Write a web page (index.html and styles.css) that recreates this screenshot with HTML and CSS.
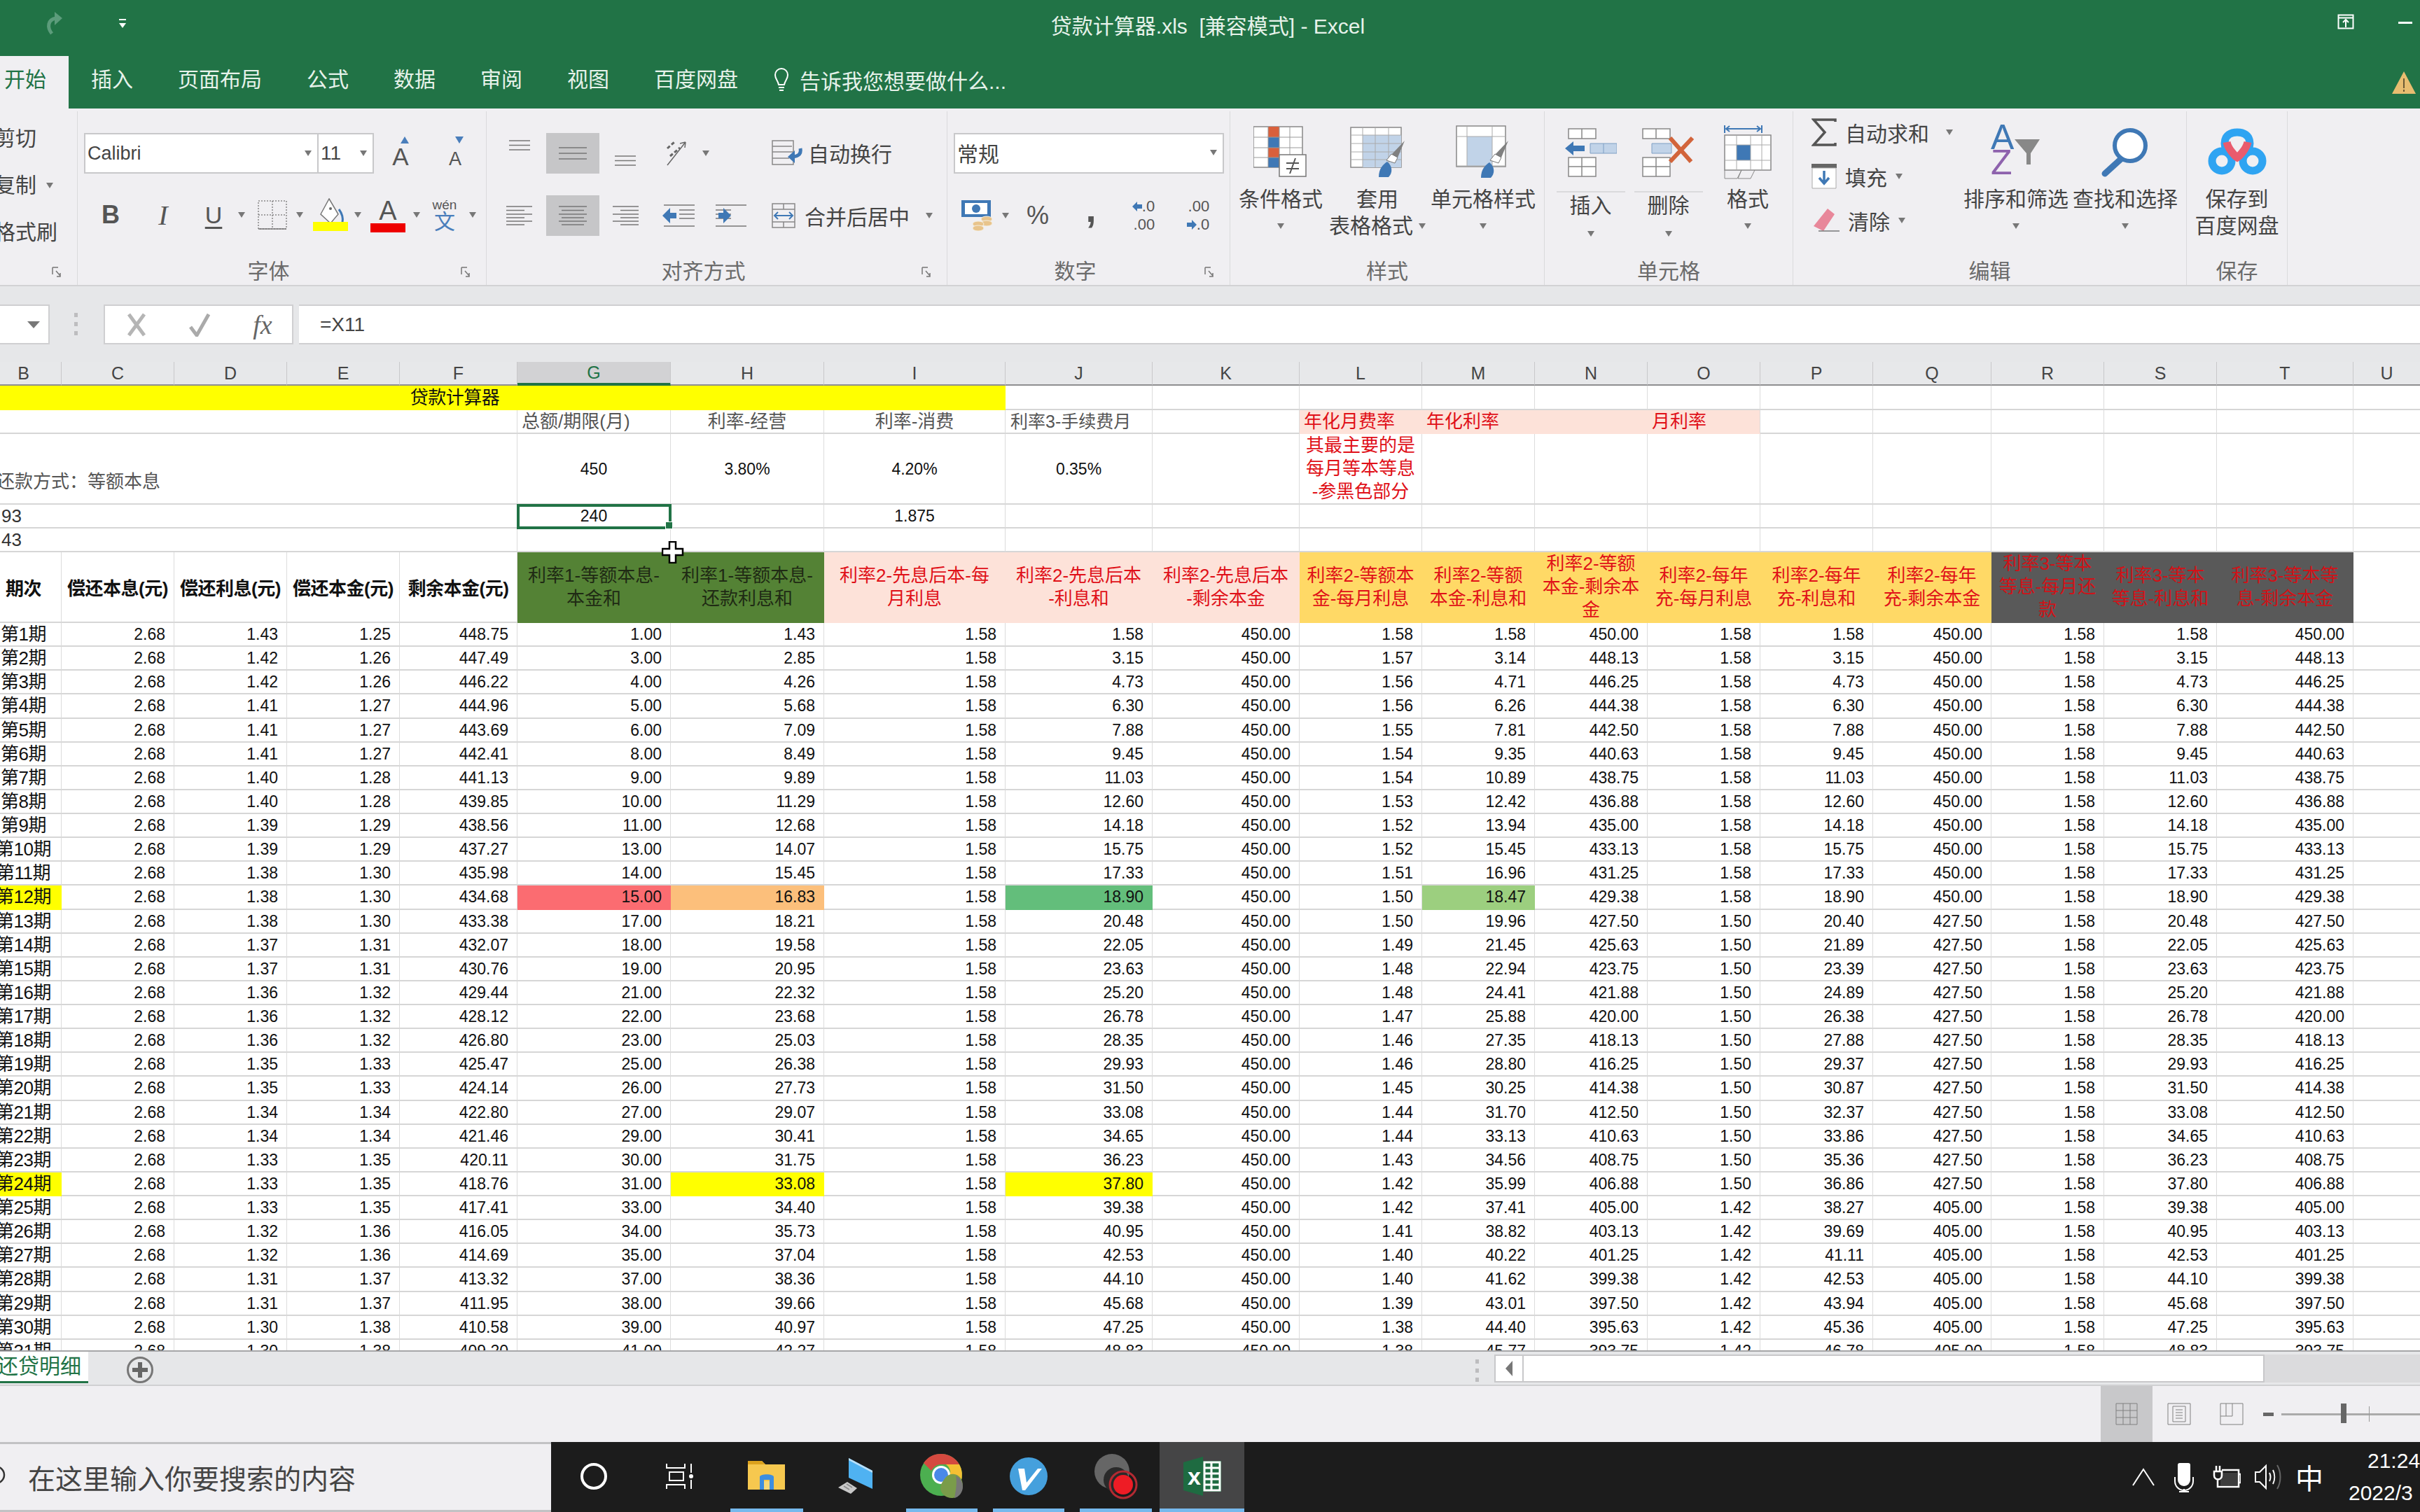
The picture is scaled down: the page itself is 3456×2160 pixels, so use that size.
FILE: index.html
```html
<!DOCTYPE html>
<html lang="zh-CN">
<head>
<meta charset="utf-8">
<title>贷款计算器.xls - Excel</title>
<link rel="stylesheet" href="styles.css">
</head>
<body>
<div class="window">
<header class="titlebar">
  <div class="qat">
    <svg class="redo" width="36" height="36" viewBox="0 0 36 36"><path d="M14 33C7 24 8 13 20 11" fill="none" stroke="#5c9c7b" stroke-width="5"/><path d="M18 2l11 9-11 10z" fill="#5c9c7b"/></svg>
    <svg class="qat-more" width="12" height="14" viewBox="0 0 12 14"><path d="M1 1h10" stroke="#fff" stroke-width="2"/><path d="M1 6h10l-5 7z" fill="#fff"/></svg>
  </div>
  <div class="doc-title">贷款计算器.xls&nbsp; [兼容模式] - Excel</div>
  <div class="winctl">
    <svg width="24" height="22" viewBox="0 0 24 22"><path d="M1.500 1.500h21v19h-21zM1.500 5.500h21M12 19V9M8 12l4-4 4 4" fill="none" stroke="#fff" stroke-width="2"/></svg>
    <span class="minimize"></span>
  </div>
</header>
<nav class="tabs">
  <span class="tab active">开始</span><span class="tab">插入</span><span class="tab">页面布局</span><span class="tab">公式</span><span class="tab">数据</span><span class="tab">审阅</span><span class="tab">视图</span><span class="tab">百度网盘</span>
  <span class="tell">
    <svg width="22" height="36" viewBox="0 0 22 36"><path d="M7 25C6 19 2 17 2 11a9 9 0 0 1 18 0c0 6-4 8-5 14zM7 29h8M8 33h6" fill="none" stroke="#fff" stroke-width="2"/></svg>
    告诉我您想要做什么...
  </span>
  <svg class="warn" width="36" height="32" viewBox="0 0 36 32"><path d="M18 0l17 32H1z" fill="#e8bd70"/><path d="M18 10v14M18 26v3" stroke="#6b5a35" stroke-width="2"/></svg>
</nav>

<section class="ribbon">
  <div class="group g-clip">
    <div class="body clip-body">
      <span>剪切</span>
      <span>复制<i class="dd dd-copy"></i></span>
      <span>格式刷</span>
    </div>
    <div class="label launch"><b></b><svg class="launcher" width="14" height="16" viewBox="0 0 14 16"><path d="M1 1h8M1 1v10M6 6l6 7M12 9v5H7" fill="none" stroke="#777" stroke-width="1.500"/></svg></div>
  </div>

  <div class="group g-font">
    <div class="body">
      <div class="font-row1">
        <div class="combo">Calibri<i class="dd"></i></div>
        <div class="combo size">11<i class="dd"></i></div>
        <div class="fsz"><svg width="12" height="10" viewBox="0 0 12 10"><path d="M6 0l6 10H0z" fill="#4a7ebb"/></svg><span class="big-a">A</span></div>
        <div class="fsz"><svg width="12" height="10" viewBox="0 0 12 10"><path d="M6 10l6-10H0z" fill="#4a7ebb"/></svg><span class="small-a">A</span></div>
      </div>
      <div class="font-row2">
        <span class="fmt bold">B</span>
        <span class="fmt ital">I</span>
        <span class="fmt under">U</span>
        <i class="dd"></i>
        <svg width="42" height="42" viewBox="0 0 42 42"><path d="M1 1h40v40H1zM21 1v40M1 21h40" fill="none" stroke="#888" stroke-width="1.500" stroke-dasharray="2 2"/><path d="M1 41h40" stroke="#777" stroke-width="1.500"/></svg>
        <i class="dd"></i>
        <svg width="52" height="48" viewBox="0 0 52 48"><path d="M24 1l13 22-11 13-14-13z" fill="#fff" stroke="#777" stroke-width="1.500"/><path d="M38 16c6 8 6 14 5 19" fill="none" stroke="#3f78b5" stroke-width="3"/><circle cx="26" cy="15" r="2" fill="#666"/><path d="M1 34h50v13H1z" fill="#ffff00"/></svg>
        <i class="dd"></i>
        <div class="fontcolor"><span>A</span><b></b></div>
        <i class="dd"></i>
        <div class="wen"><span>wén</span><em>文</em></div>
        <i class="dd"></i>
      </div>
    </div>
    <div class="label launch"><b>字体</b><svg class="launcher" width="14" height="16" viewBox="0 0 14 16"><path d="M1 1h8M1 1v10M6 6l6 7M12 9v5H7" fill="none" stroke="#777" stroke-width="1.500"/></svg></div>
  </div>

  <div class="group g-align">
    <div class="body">
      <div class="align-row1">
        <svg width="32" height="16" viewBox="0 0 32 16"><path d="M1 1h30M1 7.500h30M1 14h30" stroke="#777" stroke-width="1.500"/></svg>
        <div class="pressed"><svg width="40" height="18" viewBox="0 0 40 18"><path d="M0 1h40M0 9h40M0 17h40" stroke="#777" stroke-width="1.500"/></svg></div>
        <svg class="lower" width="32" height="16" viewBox="0 0 32 16"><path d="M1 1h30M1 7.500h30M1 14h30" stroke="#777" stroke-width="1.500"/></svg>
        <div class="orient"><svg width="42" height="38" viewBox="0 0 42 38"><path d="M6 36L32 3M32 3l-8 2M32 3l-1 8" fill="none" stroke="#666" stroke-width="1.500"/><path d="M6 12l10-9M10 23l14-12" fill="none" stroke="#666" stroke-width="3" stroke-dasharray="5 3"/></svg><i class="dd"></i></div>
        <div class="wrap"><svg width="46" height="36" viewBox="0 0 46 36"><path d="M1 1h30v16H1zM1 17h30v18H1zM1 9h28M1 26h24" fill="none" stroke="#888" stroke-width="1.500"/><path d="M41 12c2 10-6 12-14 12" fill="none" stroke="#3f78b5" stroke-width="5"/><path d="M33 15l-10 9 10 9z" fill="#3f78b5"/></svg><span>自动换行</span></div>
      </div>
      <div class="align-row2">
        <svg width="38" height="28" viewBox="0 0 38 28"><path d="M0 1h37M0 6.500h26M0 12h37M0 17h26M0 22h37M0 27h26" stroke="#777" stroke-width="1.500"/></svg>
        <div class="pressed"><svg width="40" height="28" viewBox="0 0 40 28"><path d="M0 1h40M4 6.500h32M0 12h40M4 17h32M0 22h40M4 27h32" stroke="#777" stroke-width="1.500"/></svg></div>
        <svg width="38" height="28" viewBox="0 0 38 28"><path d="M1 1h37M12 6.500h26M1 12h37M12 17h26M1 22h37M12 27h26" stroke="#777" stroke-width="1.500"/></svg>
        <svg width="46" height="32" viewBox="0 0 46 32"><path d="M2 1h44M24 8h22M24 14h22M24 20h22M2 31h44" stroke="#777" stroke-width="1.500"/><path d="M0 16l11-11v7h9v8h-9v7z" fill="#3f78b5"/></svg>
        <svg width="46" height="32" viewBox="0 0 46 32"><path d="M0 1h44M0 8h22M0 14h22M0 20h22M0 31h44" stroke="#777" stroke-width="1.500"/><path d="M20 16L9 5v7H2v8h7v7z" fill="#3f78b5" transform="translate(2 0)"/></svg>
        <div class="merge"><svg width="34" height="36" viewBox="0 0 34 36"><path d="M1 1h32v34H1zM1 9h32M1 27h32M17 1v8M17 27v8" fill="none" stroke="#888" stroke-width="1.500"/><path d="M4 18h26M9 13l-5 5 5 5M25 13l5 5-5 5" fill="none" stroke="#3f78b5" stroke-width="2"/></svg><span>合并后居中</span><i class="dd"></i></div>
      </div>
    </div>
    <div class="label launch"><b>对齐方式</b><svg class="launcher" width="14" height="16" viewBox="0 0 14 16"><path d="M1 1h8M1 1v10M6 6l6 7M12 9v5H7" fill="none" stroke="#777" stroke-width="1.500"/></svg></div>
  </div>

  <div class="group g-num">
    <div class="body">
      <div class="combo num">常规<i class="dd"></i></div>
      <div class="num-row2">
        <svg width="52" height="44" viewBox="0 0 52 44"><path d="M0 0h42v24H0z" fill="#3f78b5"/><path d="M5 4h32v16H5z" fill="#fff"/><circle cx="21" cy="12" r="6" fill="#3f78b5"/><g fill="#e8c48c" stroke="#f5efe2"><ellipse cx="36" cy="27" rx="8" ry="4"/><ellipse cx="36" cy="33" rx="8" ry="4"/><ellipse cx="24" cy="34" rx="8" ry="4"/><ellipse cx="24" cy="40" rx="8" ry="4"/></g></svg>
        <i class="dd"></i>
        <span class="pct">%</span>
        <span class="comma">,</span>
        <div class="dec"><span><svg width="14" height="14" viewBox="0 0 14 14"><path d="M0 7l7-7v4h7v6H7v4z" fill="#3f78b5"/></svg>.0</span><span>.00</span></div>
        <div class="dec"><span>.00</span><span><svg width="14" height="14" viewBox="0 0 14 14"><path d="M14 7L7 0v4H0v6h7v4z" fill="#3f78b5"/></svg>.0</span></div>
      </div>
    </div>
    <div class="label launch"><b>数字</b><svg class="launcher" width="14" height="16" viewBox="0 0 14 16"><path d="M1 1h8M1 1v10M6 6l6 7M12 9v5H7" fill="none" stroke="#777" stroke-width="1.500"/></svg></div>
  </div>

  <div class="group g-style">
    <div class="body big-row">
      <div class="big b138">
        <svg class="bigicon" width="78" height="72" viewBox="0 0 78 72"><path d="M0 0h70v58H0z" fill="#fff" stroke="#888" stroke-width="1.500"/><path d="M21 0h16v15H21z" fill="#d9603c"/><path d="M21 15h16v15H21z" fill="#3f78b5"/><path d="M21 30h16v14H21z" fill="#d9603c"/><path d="M21 44h16v14H21z" fill="#3f78b5"/><path d="M0 15h70M0 30h70M0 44h70M21 0v58M37 0v58M52 0v58" fill="none" stroke="#999"/><path d="M37 40h38v31H37z" fill="#fff" stroke="#777" stroke-width="1.500"/><path d="M47 52h18M47 60h18M60 45l-8 22" fill="none" stroke="#555" stroke-width="2"/></svg>
        <span>条件格式</span><i class="dd"></i>
      </div>
      <div class="big b138">
        <svg class="bigicon" width="78" height="72" viewBox="0 0 78 72"><path d="M1 1h72v57H1z" fill="#fff" stroke="#888" stroke-width="1.500"/><path d="M18 12h55v46H18z" fill="#c1d3e8"/><path d="M1 12h72M1 24h72M1 36h72M1 47h72M18 1v57M36 1v57M55 1v57" fill="none" stroke="#aaa"/><path d="M78 20l-10 24-9-4z" fill="#808080"/><path d="M52 48l7-9 9 5-4 8z" fill="#fff" stroke="#777"/><path d="M41 72c0-12 6-18 12-22 8 6 8 16 2 22z" fill="#3f78b5"/></svg>
        <span>套用</span><span>表格格式<i class="dd inline"></i></span>
      </div>
      <div class="big b150">
        <svg class="bigicon" width="78" height="76" viewBox="0 0 78 76"><path d="M1 1h70v58H1z" fill="#fff" stroke="#888" stroke-width="1.500"/><path d="M16 16h36v42H16z" fill="#c1d3e8"/><path d="M1 16h70M1 58h70M16 1v58M52 1v58" fill="none" stroke="#aaa"/><path d="M75 22l-10 24-9-4z" fill="#808080"/><path d="M49 50l7-9 9 5-4 8z" fill="#fff" stroke="#777"/><path d="M36 75c0-12 6-18 12-22 8 6 8 16 2 22z" fill="#3f78b5"/></svg>
        <span>单元格样式</span><i class="dd"></i>
      </div>
    </div>
    <div class="label"><b>样式</b></div>
  </div>

  <div class="group g-cells">
    <div class="body big-row">
      <div class="big b-ins">
        <svg class="cellicon" width="74" height="70" viewBox="0 0 74 70"><path d="M5 1h39v14H5zM24 1v14M5 42h39v27H5zM5 55h39M24 42v27" fill="#fff" stroke="#888" stroke-width="1.500"/><path d="M36 22h38v14H36z" fill="#c1d3e8" stroke="#7f9fc4"/><path d="M55 22v14" stroke="#7f9fc4"/><path d="M0 29l12-10v6h16v8H12v6z" fill="#3f78b5"/></svg>
        <span class="rule">插入</span><i class="dd low"></i>
      </div>
      <div class="big b-del">
        <svg class="cellicon" width="76" height="70" viewBox="0 0 76 70"><path d="M1 1h39v14H1zM20 1v14M1 42h39v27H1zM1 55h39M20 42v27" fill="#fff" stroke="#888" stroke-width="1.500"/><path d="M14 22h28v14H14z" fill="#c1d3e8" stroke="#7f9fc4"/><path d="M40 14l30 34M72 14L40 48" fill="none" stroke="#d2643b" stroke-width="6"/></svg>
        <span class="rule">删除</span><i class="dd low"></i>
      </div>
      <div class="big b-fmt">
        <svg class="bigicon fmticon" width="68" height="76" viewBox="0 0 68 76"><path d="M1 0v11M54 0v11M3 5h49M8 1L3 5l5 4M47 1l5 4-5 4" fill="none" stroke="#3f78b5" stroke-width="2"/><path d="M1 14h66v50H1z" fill="#fff" stroke="#888" stroke-width="1.500"/><path d="M18 28h20v22H18z" fill="#3f78b5"/><path d="M1 28h66M1 50h66M18 14v50M38 14v50M54 14v50" fill="none" stroke="#aaa"/><path d="M1 64v12h18l6-12M25 64l-5 12h18l6-12" fill="none" stroke="#888"/></svg>
        <span>格式</span><i class="dd"></i>
      </div>
    </div>
    <div class="label"><b>单元格</b></div>
  </div>

  <div class="group g-edit">
    <div class="body big-row">
      <div class="edit-col">
        <div class="edit-item"><svg width="36" height="40" viewBox="0 0 36 40"><path d="M34 5V2H3l16 18L3 38h31v-3" fill="none" stroke="#555" stroke-width="3.500"/></svg><span>自动求和</span><i class="dd"></i></div>
        <div class="edit-item"><svg width="36" height="36" viewBox="0 0 36 36"><path d="M0 0h36v6H0z" fill="#666"/><path d="M1 6h34v29H1z" fill="#fff" stroke="#aaa"/><path d="M18 10v17M11 20l7 8 7-8" fill="none" stroke="#3f78b5" stroke-width="3.500"/></svg><span>填充</span><i class="dd"></i></div>
        <div class="edit-item"><svg width="40" height="36" viewBox="0 0 40 36"><path d="M23 1l10 8-16 24-14-7z" fill="#e8879a"/><path d="M10 33h30" stroke="#777" stroke-width="1.500"/></svg><span>清除</span><i class="dd"></i></div>
      </div>
      <div class="big b-sort">
        <svg class="bigicon" width="72" height="68" viewBox="0 0 72 68"><text class="az a" x="0" y="30">A</text><text class="az z" x="0" y="66">Z</text><path d="M34 16h36L57 36v16h-6V36z" fill="#888"/></svg>
        <span>排序和筛选</span><i class="dd"></i>
      </div>
      <div class="big b-find">
        <svg class="bigicon" width="70" height="70" viewBox="0 0 70 70"><circle cx="42" cy="26" r="22" fill="#fff" stroke="#3f78b5" stroke-width="6"/><path d="M28 46L6 66" stroke="#3f78b5" stroke-width="9" stroke-linecap="round"/></svg>
        <span>查找和选择</span><i class="dd"></i>
      </div>
    </div>
    <div class="label"><b>编辑</b></div>
  </div>

  <div class="group g-save">
    <div class="body big-row">
      <div class="big b-save">
        <svg class="bigicon" width="84" height="68" viewBox="0 0 84 68"><g fill="none" stroke-width="11"><circle cx="20" cy="47" r="14" stroke="#2fa4f2"/><circle cx="64" cy="47" r="14" stroke="#2fa4f2"/><path d="M29 36c-8-10-8-30 13-30s21 20 13 30" stroke="#2fa4f2"/><path d="M27 20c2 10 12 20 15 22 3-2 13-12 15-22" stroke="#e95b6d"/></g></svg>
        <span>保存到</span><span>百度网盘</span>
      </div>
    </div>
    <div class="label"><b>保存</b></div>
  </div>
</section>

<section class="formula">
  <div class="namebox"><i class="dd dd-name"></i></div>
  <span class="dots"></span>
  <div class="fx-btns">
    <svg width="30" height="34" viewBox="0 0 30 34"><path d="M4 2l22 30M26 2L4 32" stroke="#b5b5b5" stroke-width="5"/></svg>
    <svg width="32" height="34" viewBox="0 0 32 34"><path d="M3 20l9 12L29 2" fill="none" stroke="#aaa" stroke-width="5"/></svg>
    <span class="fx">fx</span>
  </div>
  <div class="fx-input">=X11</div>
</section>

<section class="sheet">
<span class="cursor"><svg width="32" height="32" viewBox="0 0 32 32"><path d="M11 1h9v10h10v9H20v11h-9V20H1v-9h10z" fill="#fff" stroke="#000" stroke-width="2.500"/></svg></span>
<table class="grid">
<colgroup><col class="c108"><col class="c161"><col class="c161"><col class="c161"><col class="c168"><col class="c219"><col class="c219"><col class="c259"><col class="c210"><col class="c210"><col class="c175"><col class="c161"><col class="c161"><col class="c161"><col class="c161"><col class="c169"><col class="c161"><col class="c161"><col class="c195"><col class="c96"></colgroup>
<thead><tr><th>B<th>C<th>D<th>E<th>F<th class="cur">G<th>H<th>I<th>J<th>K<th>L<th>M<th>N<th>O<th>P<th>Q<th>R<th>S<th>T<th>U</tr></thead>
<tbody>
<tr class="r1"><td colspan="8" class="title">贷款计算器<td><td><td><td><td><td><td><td><td><td><td><td></tr>
<tr class="r2"><td colspan="5" class="txt"><td class="txt lab lab-total">总额/期限(月)<td class="ctr lab">利率-经营<td class="ctr lab">利率-消费<td class="txt lab lab3">利率3-手续费月<td><td class="pink redl nb">年化月费率<td class="pink redl nb">年化利率<td class="pink nb"><td class="pink redl">月利率<td><td><td><td><td><td></tr>
<tr class="r3"><td colspan="5" class="txt pay">还款方式：等额本息<td class="ctr">450<td class="ctr">3.80%<td class="ctr">4.20%<td class="ctr">0.35%<td><td class="ctr red wrapc">其最主要的是<br>每月等本等息<br>-参黑色部分<td><td><td><td><td><td><td><td><td></tr>
<tr class="r4"><td colspan="5" class="txt">93<td class="ctr sel">240<td><td class="ctr">1.875<td><td><td><td><td><td><td><td><td><td><td><td></tr>
<tr class="r4"><td colspan="5" class="txt">43<td><td><td><td><td><td><td><td><td><td><td><td><td><td><td></tr>
<tr class="r6"><th>期次<th>偿还本息(元)<th>偿还利息(元)<th>偿还本金(元)<th>剩余本金(元)<td class="hg">利率1-等额本息-<br>本金和<td class="hg">利率1-等额本息-<br>还款利息和<td class="hp">利率2-先息后本-每<br>月利息<td class="hp">利率2-先息后本<br>-利息和<td class="hp">利率2-先息后本<br>-剩余本金<td class="hy">利率2-等额本<br>金-每月利息<td class="hy">利率2-等额<br>本金-利息和<td class="hy">利率2-等额<br>本金-剩余本<br>金<td class="hy">利率2-每年<br>充-每月利息<td class="hy">利率2-每年<br>充-利息和<td class="hy">利率2-每年<br>充-剩余本金<td class="hd">利率3-等本<br>等息-每月还<br>款<td class="hd">利率3-等本<br>等息-利息和<td class="hd">利率3-等本等<br>息-剩余本金<td></tr>
<tr><td>第1期<td>2.68<td>1.43<td>1.25<td>448.75<td>1.00<td>1.43<td>1.58<td>1.58<td>450.00<td>1.58<td>1.58<td>450.00<td>1.58<td>1.58<td>450.00<td>1.58<td>1.58<td>450.00<td></tr>
<tr><td>第2期<td>2.68<td>1.42<td>1.26<td>447.49<td>3.00<td>2.85<td>1.58<td>3.15<td>450.00<td>1.57<td>3.14<td>448.13<td>1.58<td>3.15<td>450.00<td>1.58<td>3.15<td>448.13<td></tr>
<tr><td>第3期<td>2.68<td>1.42<td>1.26<td>446.22<td>4.00<td>4.26<td>1.58<td>4.73<td>450.00<td>1.56<td>4.71<td>446.25<td>1.58<td>4.73<td>450.00<td>1.58<td>4.73<td>446.25<td></tr>
<tr><td>第4期<td>2.68<td>1.41<td>1.27<td>444.96<td>5.00<td>5.68<td>1.58<td>6.30<td>450.00<td>1.56<td>6.26<td>444.38<td>1.58<td>6.30<td>450.00<td>1.58<td>6.30<td>444.38<td></tr>
<tr><td>第5期<td>2.68<td>1.41<td>1.27<td>443.69<td>6.00<td>7.09<td>1.58<td>7.88<td>450.00<td>1.55<td>7.81<td>442.50<td>1.58<td>7.88<td>450.00<td>1.58<td>7.88<td>442.50<td></tr>
<tr><td>第6期<td>2.68<td>1.41<td>1.27<td>442.41<td>8.00<td>8.49<td>1.58<td>9.45<td>450.00<td>1.54<td>9.35<td>440.63<td>1.58<td>9.45<td>450.00<td>1.58<td>9.45<td>440.63<td></tr>
<tr><td>第7期<td>2.68<td>1.40<td>1.28<td>441.13<td>9.00<td>9.89<td>1.58<td>11.03<td>450.00<td>1.54<td>10.89<td>438.75<td>1.58<td>11.03<td>450.00<td>1.58<td>11.03<td>438.75<td></tr>
<tr><td>第8期<td>2.68<td>1.40<td>1.28<td>439.85<td>10.00<td>11.29<td>1.58<td>12.60<td>450.00<td>1.53<td>12.42<td>436.88<td>1.58<td>12.60<td>450.00<td>1.58<td>12.60<td>436.88<td></tr>
<tr><td>第9期<td>2.68<td>1.39<td>1.29<td>438.56<td>11.00<td>12.68<td>1.58<td>14.18<td>450.00<td>1.52<td>13.94<td>435.00<td>1.58<td>14.18<td>450.00<td>1.58<td>14.18<td>435.00<td></tr>
<tr><td>第10期<td>2.68<td>1.39<td>1.29<td>437.27<td>13.00<td>14.07<td>1.58<td>15.75<td>450.00<td>1.52<td>15.45<td>433.13<td>1.58<td>15.75<td>450.00<td>1.58<td>15.75<td>433.13<td></tr>
<tr><td>第11期<td>2.68<td>1.38<td>1.30<td>435.98<td>14.00<td>15.45<td>1.58<td>17.33<td>450.00<td>1.51<td>16.96<td>431.25<td>1.58<td>17.33<td>450.00<td>1.58<td>17.33<td>431.25<td></tr>
<tr><td class="yel">第12期<td>2.68<td>1.38<td>1.30<td>434.68<td class="hot">15.00<td class="warm">16.83<td>1.58<td class="grn">18.90<td>450.00<td>1.50<td class="lgrn">18.47<td>429.38<td>1.58<td>18.90<td>450.00<td>1.58<td>18.90<td>429.38<td></tr>
<tr><td>第13期<td>2.68<td>1.38<td>1.30<td>433.38<td>17.00<td>18.21<td>1.58<td>20.48<td>450.00<td>1.50<td>19.96<td>427.50<td>1.50<td>20.40<td>427.50<td>1.58<td>20.48<td>427.50<td></tr>
<tr><td>第14期<td>2.68<td>1.37<td>1.31<td>432.07<td>18.00<td>19.58<td>1.58<td>22.05<td>450.00<td>1.49<td>21.45<td>425.63<td>1.50<td>21.89<td>427.50<td>1.58<td>22.05<td>425.63<td></tr>
<tr><td>第15期<td>2.68<td>1.37<td>1.31<td>430.76<td>19.00<td>20.95<td>1.58<td>23.63<td>450.00<td>1.48<td>22.94<td>423.75<td>1.50<td>23.39<td>427.50<td>1.58<td>23.63<td>423.75<td></tr>
<tr><td>第16期<td>2.68<td>1.36<td>1.32<td>429.44<td>21.00<td>22.32<td>1.58<td>25.20<td>450.00<td>1.48<td>24.41<td>421.88<td>1.50<td>24.89<td>427.50<td>1.58<td>25.20<td>421.88<td></tr>
<tr><td>第17期<td>2.68<td>1.36<td>1.32<td>428.12<td>22.00<td>23.68<td>1.58<td>26.78<td>450.00<td>1.47<td>25.88<td>420.00<td>1.50<td>26.38<td>427.50<td>1.58<td>26.78<td>420.00<td></tr>
<tr><td>第18期<td>2.68<td>1.36<td>1.32<td>426.80<td>23.00<td>25.03<td>1.58<td>28.35<td>450.00<td>1.46<td>27.35<td>418.13<td>1.50<td>27.88<td>427.50<td>1.58<td>28.35<td>418.13<td></tr>
<tr><td>第19期<td>2.68<td>1.35<td>1.33<td>425.47<td>25.00<td>26.38<td>1.58<td>29.93<td>450.00<td>1.46<td>28.80<td>416.25<td>1.50<td>29.37<td>427.50<td>1.58<td>29.93<td>416.25<td></tr>
<tr><td>第20期<td>2.68<td>1.35<td>1.33<td>424.14<td>26.00<td>27.73<td>1.58<td>31.50<td>450.00<td>1.45<td>30.25<td>414.38<td>1.50<td>30.87<td>427.50<td>1.58<td>31.50<td>414.38<td></tr>
<tr><td>第21期<td>2.68<td>1.34<td>1.34<td>422.80<td>27.00<td>29.07<td>1.58<td>33.08<td>450.00<td>1.44<td>31.70<td>412.50<td>1.50<td>32.37<td>427.50<td>1.58<td>33.08<td>412.50<td></tr>
<tr><td>第22期<td>2.68<td>1.34<td>1.34<td>421.46<td>29.00<td>30.41<td>1.58<td>34.65<td>450.00<td>1.44<td>33.13<td>410.63<td>1.50<td>33.86<td>427.50<td>1.58<td>34.65<td>410.63<td></tr>
<tr><td>第23期<td>2.68<td>1.33<td>1.35<td>420.11<td>30.00<td>31.75<td>1.58<td>36.23<td>450.00<td>1.43<td>34.56<td>408.75<td>1.50<td>35.36<td>427.50<td>1.58<td>36.23<td>408.75<td></tr>
<tr><td class="yel">第24期<td>2.68<td>1.33<td>1.35<td>418.76<td>31.00<td class="yel">33.08<td>1.58<td class="yel">37.80<td>450.00<td>1.42<td>35.99<td>406.88<td>1.50<td>36.86<td>427.50<td>1.58<td>37.80<td>406.88<td></tr>
<tr><td>第25期<td>2.68<td>1.33<td>1.35<td>417.41<td>33.00<td>34.40<td>1.58<td>39.38<td>450.00<td>1.42<td>37.41<td>405.00<td>1.42<td>38.27<td>405.00<td>1.58<td>39.38<td>405.00<td></tr>
<tr><td>第26期<td>2.68<td>1.32<td>1.36<td>416.05<td>34.00<td>35.73<td>1.58<td>40.95<td>450.00<td>1.41<td>38.82<td>403.13<td>1.42<td>39.69<td>405.00<td>1.58<td>40.95<td>403.13<td></tr>
<tr><td>第27期<td>2.68<td>1.32<td>1.36<td>414.69<td>35.00<td>37.04<td>1.58<td>42.53<td>450.00<td>1.40<td>40.22<td>401.25<td>1.42<td>41.11<td>405.00<td>1.58<td>42.53<td>401.25<td></tr>
<tr><td>第28期<td>2.68<td>1.31<td>1.37<td>413.32<td>37.00<td>38.36<td>1.58<td>44.10<td>450.00<td>1.40<td>41.62<td>399.38<td>1.42<td>42.53<td>405.00<td>1.58<td>44.10<td>399.38<td></tr>
<tr><td>第29期<td>2.68<td>1.31<td>1.37<td>411.95<td>38.00<td>39.66<td>1.58<td>45.68<td>450.00<td>1.39<td>43.01<td>397.50<td>1.42<td>43.94<td>405.00<td>1.58<td>45.68<td>397.50<td></tr>
<tr><td>第30期<td>2.68<td>1.30<td>1.38<td>410.58<td>39.00<td>40.97<td>1.58<td>47.25<td>450.00<td>1.38<td>44.40<td>395.63<td>1.42<td>45.36<td>405.00<td>1.58<td>47.25<td>395.63<td></tr>
<tr><td>第31期<td>2.68<td>1.30<td>1.38<td>409.20<td>41.00<td>42.27<td>1.58<td>48.83<td>450.00<td>1.38<td>45.77<td>393.75<td>1.42<td>46.78<td>405.00<td>1.58<td>48.83<td>393.75<td></tr>
</tbody>
</table>
</section>

<section class="sheetbar">
  <span class="sheet-tab">还贷明细</span>
  <svg class="addsheet" width="40" height="40" viewBox="0 0 40 40"><circle cx="20" cy="20" r="17.500" fill="none" stroke="#777" stroke-width="3"/><path d="M20 9v22M9 20h22" stroke="#666" stroke-width="6"/></svg>
  <span class="dots sb-dots"></span>
  <div class="hscroll"><span class="sb-left"><svg width="12" height="22" viewBox="0 0 12 22"><path d="M11 0v22L1 11z" fill="#777"/></svg></span><span class="sb-thumb"></span></div>
</section>

<footer class="status">
  <span class="view active"><svg width="32" height="32" viewBox="0 0 32 32"><path d="M1 1h30v30H1zM1 11h30M1 21h30M11 1v30M21 1v30" fill="none" stroke="#808080"/></svg></span>
  <span class="view"><svg width="34" height="32" viewBox="0 0 34 32"><path d="M1 1h32v30H1zM8 5h18v22H8zM12 10h10M12 14h10M12 18h10M12 22h10" fill="none" stroke="#808080"/></svg></span>
  <span class="view"><svg width="34" height="32" viewBox="0 0 34 32"><path d="M1 1h32v30H1zM1 19h17V1M9 1v18" fill="none" stroke="#808080"/></svg></span>
  <span class="zoom-minus"></span>
  <div class="slider"><span class="slider-thumb"></span><span class="slider-tick"></span></div>
</footer>

<footer class="taskbar">
  <div class="search">
    <svg class="mag" width="10" height="34" viewBox="0 0 10 34"><circle cx="-6" cy="14" r="12" fill="none" stroke="#333" stroke-width="2.500"/></svg>
    <span>在这里输入你要搜索的内容</span>
  </div>
  <div class="apps">
    <span class="app"><svg width="40" height="40" viewBox="0 0 40 40"><circle cx="20" cy="20" r="17" fill="none" stroke="#fff" stroke-width="4"/></svg></span>
    <span class="app"><svg width="40" height="38" viewBox="0 0 40 38"><path d="M2 1v6h26V1M6 13h20v12H6zM2 37v-6h26v6M37 1v13M37 24v13" fill="none" stroke="#fff" stroke-width="2"/><circle cx="37" cy="19" r="3" fill="#fff"/></svg></span>
    <span class="app on"><svg width="56" height="46" viewBox="0 0 56 46"><path d="M1 6V1h20l5 5h28v36H1z" fill="#f6c84f"/><path d="M1 1h20l5 5H1z" fill="#dca21d"/><path d="M18 42V24c0-5 20-5 20 0v18h-6V28H24v14z" fill="#3d8ee0"/><path d="M24 30h8v12h-8z" fill="#f6d978"/></svg></span>
    <span class="app"><svg width="50" height="52" viewBox="0 0 50 52"><path d="M16 0l34 18v26L16 28z" fill="#4fb2f2"/><path d="M16 0l34 18v3L16 3z" fill="#b9e0fa"/><path d="M14 34l14 9-9 8L1 42z" fill="#c8c8c8"/><path d="M9 40l8 5M13 37l8 5" stroke="#8a8a8a" stroke-width="1.500"/></svg></span>
    <span class="app on"><svg width="64" height="66" viewBox="0 0 64 66"><circle cx="31" cy="31" r="30" fill="#4caf50"/><path d="M31 1a30 30 0 0 1 26 15H31a15 15 0 0 0-14 9L6 14A30 30 0 0 1 31 1z" fill="#d5493f"/><path d="M57 16a30 30 0 0 1 2 25L44 30a15 15 0 0 0-6-14z" fill="#f5c033"/><circle cx="31" cy="31" r="13" fill="#fff"/><circle cx="31" cy="31" r="10" fill="#4a89e8"/><path d="M38 34c8-8 20-4 23 6s-3 24-14 24-17-8-17-14 5-12 8-16z" fill="#7a9c4a"/><path d="M52 32a18 18 0 0 1 10 16c0 8-6 15-12 16 2-10 4-22 2-32z" fill="#777"/></svg></span>
    <span class="app on"><svg width="56" height="56" viewBox="0 0 56 56"><circle cx="28" cy="28" r="27" fill="#45a0dd"/><path d="M13 17h9l3 20 16-20h6L23 48h-4z" fill="#fff"/></svg></span>
    <span class="app on"><svg width="64" height="66" viewBox="0 0 64 66"><circle cx="26" cy="26" r="25" fill="#666"/><circle cx="32" cy="38" r="18" fill="#2a2a2a"/><circle cx="42" cy="45" r="19" fill="none" stroke="#b32a32" stroke-width="3"/><circle cx="42" cy="45" r="14" fill="#ee1c25"/></svg></span>
    <span class="app on cur-app"><svg width="54" height="56" viewBox="0 0 54 56"><path d="M0 8L28 0v56L0 48z" fill="#1e6b41"/><path d="M28 6h26v44H28z" fill="#1e6b41"/><path d="M30 8h22v40H30zM30 16h22M30 24h22M30 32h22M30 40h22M40 8v40" fill="none" stroke="#fff" stroke-width="3"/><text class="xl" x="6" y="40">x</text></svg></span>
  </div>
  <div class="tray">
    <svg width="34" height="26" viewBox="0 0 34 26"><path d="M2 25L17 2l15 23" fill="none" stroke="#fff" stroke-width="2"/></svg>
    <svg width="30" height="44" viewBox="0 0 30 44"><path d="M9 2h12a3 3 0 0 1 3 3v21a9 9 0 0 1-18 0V5a3 3 0 0 1 3-3z" fill="#fff"/><path d="M2 22v6a13 13 0 0 0 26 0v-6M15 39v4M8 43h14" fill="none" stroke="#fff" stroke-width="2"/></svg>
    <svg width="40" height="32" viewBox="0 0 40 32"><path d="M5 0v8M10 0v8M2 8h11v6a5 5 0 0 1-11 0zM7 18v12h30V6H13M37 12h3v12h-3" fill="none" stroke="#fff" stroke-width="2.500"/><path d="M11 10h24v18H11z" fill="#fff" opacity=".15"/></svg>
    <svg width="40" height="40" viewBox="0 0 40 40"><path d="M1 13h6l9-9v32l-9-9H1z" fill="none" stroke="#fff" stroke-width="2"/><path d="M21 14c2 4 2 8 0 12M26 10c3 6 3 14 0 20" fill="none" stroke="#fff" stroke-width="2"/><path d="M32 3c6 10 6 24 0 34" fill="none" stroke="#666" stroke-width="2"/></svg>
    <span class="ime">中</span>
    <div class="clock"><span>21:24</span><span>2022/3</span></div>
  </div>
</footer>
</div>
</body>
</html>
```
FILE: styles.css
```css
*{box-sizing:border-box}
html,body{margin:0;padding:0;background:#f0eff2}
body{width:3456px;height:2160px;overflow:hidden;font-family:"Liberation Sans","Noto Sans CJK SC",sans-serif;color:#444}
svg{display:block;flex:none}
i,em{font-style:normal}
.window{width:3456px;height:2160px;display:flex;flex-direction:column;overflow:hidden}

/* title */
.titlebar{height:80px;background:#217346;display:grid;grid-template-columns:1fr auto 1fr;align-items:start;color:#e8f3ec}
.qat{display:flex;padding:15px 0 0 60px}
.qat-more{margin:12px 0 0 73px}
.doc-title{font-size:30px;line-height:38px;padding-top:19px;white-space:nowrap;color:#e6f2ea;margin-left:-6px}
.winctl{display:flex;justify-content:flex-end;padding:20px 11px 0 0}
.minimize{width:20px;height:3px;background:#fff;margin:11px 0 0 63px}

.tabs{height:75px;background:#217346;display:flex;margin-left:-26px;position:relative;align-items:stretch}
.tab{padding:0 32px;font-size:30px;line-height:68px;color:#e6f2ea;white-space:nowrap}
.tab.active{background:#f0eff2;color:#217346}
.tell{display:flex;align-items:center;gap:15px;font-size:30px;color:#e6f2ea;margin-left:19px;padding-bottom:8px;white-space:nowrap}
.warn{position:absolute;left:3441px;top:22px}

/* ribbon */
.ribbon{height:254px;background:#f0eff2;display:flex;padding:4px 0 0;border-bottom:2px solid #d2d2d4}
.group{display:flex;flex-direction:column;justify-content:space-between;border-right:1.500px solid #dadadc;flex:none}
.body{height:206px}
.label{height:40px;display:flex;font-size:30px;line-height:42px;color:#6b6b6b;text-align:center}
.label b{font-weight:normal;flex:1}
.launch .launcher{margin:14px 22px 0 2px}
.g-clip{width:111px}
.g-font{width:584px}
.g-align{width:658px}
.g-num{width:404px}
.g-style{width:449px}
.g-cells{width:355px}
.g-edit{width:562px}
.g-save{width:144px}

.dd{display:inline-block;width:0;height:0;border:5px solid transparent;border-top:8px solid #777;border-bottom:0;flex:none}
.clip-body{display:flex;flex-direction:column;font-size:30px;line-height:38px;margin-left:-8px;padding-top:20px;gap:29px;white-space:nowrap}
.dd-copy{margin:0 0 6px 14px}

.combo{height:58px;background:#fff;border:2px solid #c8c8ca;font-size:27px;display:flex;align-items:center;justify-content:space-between;padding:0 8px 0 3px;color:#444;flex:none}
.font-row1{display:grid;grid-template-columns:335px 79px 76px 80px;margin:31px 0 0 9px;align-items:center}
.size{border-left:0;font-size:28px}
.fsz{display:flex;flex-direction:column;align-items:center;height:48px;justify-content:flex-start;color:#555}
.fsz svg{margin-left:12px}
.big-a{font-size:35px;line-height:34px;margin-top:2px}
.small-a{font-size:27px;line-height:28px;margin-top:8px}
.font-row2{display:grid;grid-template-columns:48px 102px 42px 38px 50px 28px 60px 18px 68px 14px 66px 14px;margin:31px 0 0 23px;height:56px;justify-items:center;align-items:center}
.fmt{font-size:36px;color:#555}
.bold{font-weight:bold}
.ital{font-family:"Liberation Serif",serif;font-style:italic;font-size:40px}
.under{text-decoration:underline;text-underline-offset:5px;font-size:34px}
.fontcolor{width:52px;display:flex;flex-direction:column;align-items:center;color:#555}
.fontcolor span{font-size:38px;line-height:36px}
.fontcolor b{display:block;width:50px;height:13px;background:#ee0000}
.wen{display:flex;flex-direction:column;align-items:center;color:#555;line-height:1}
.wen span{font-size:19px}
.wen em{font-size:30px;color:#4a7ebb}

.align-row1,.align-row2{display:grid;grid-template-columns:54px 98px 52px 122px auto;margin:31px 0 0 20px;justify-items:center;align-items:center;height:58px}
.align-row2{grid-template-columns:54px 98px 52px 100px 52px auto}
.pressed{width:76px;height:58px;background:#c6c6c8;display:flex;align-items:center;justify-content:center}
.lower{align-self:end;margin-bottom:10px}
.align-row1>svg:first-child{align-self:start;margin-top:10px}
.orient{display:flex;align-items:center;gap:14px}
.wrap{display:flex;align-items:center;gap:6px;justify-self:start;margin-left:61px;font-size:30px;white-space:nowrap;padding-bottom:3px}
.merge{display:flex;align-items:center;gap:13px;justify-self:start;margin-left:31px;font-size:30px;white-space:nowrap}
.merge .dd{margin-left:10px}

.num{margin:31px 0 0 9px;width:386px;font-size:30px;padding-bottom:3px}
.num-row2{display:grid;grid-template-columns:55px 20px 72px 80px 70px 86px;margin:31px 0 0 18px;height:58px;justify-items:center;align-items:center}
.pct{font-size:36px;color:#555}
.comma{font-size:54px;font-weight:bold;line-height:30px;color:#555;padding-bottom:20px}
.dec{display:flex;flex-direction:column;align-items:flex-end;font-size:22px;line-height:26px;color:#555}
.dec span{display:flex;align-items:center}

.big-row{display:flex;align-items:flex-start}
.big{display:flex;flex-direction:column;align-items:center;font-size:30px;line-height:38px;white-space:nowrap;padding-top:18px;flex:none}
.bigicon{height:80px;margin-bottom:9px}
.big .dd{margin-top:15px}
.big .dd.inline{margin:0 0 5px 8px;vertical-align:middle}
.b138{width:138px}
.b150{width:150px;margin-left:7px}
.g-style .big-row{padding-left:3px}
.cellicon{height:70px;margin-top:6px}
.rule{border-top:2px solid #dadadc;width:98px;text-align:center;margin-top:20px}
.big .dd.low{margin-top:17px}
.b-ins{width:111px;margin-left:10px}
.b-del{width:111px}
.b-fmt{width:100px;margin-left:8px}
.edit-col{width:243px;padding:10px 0 0 26px;display:flex;flex-direction:column;gap:23px;flex:none}
.edit-item{display:flex;align-items:center;gap:12px;height:40px;font-size:30px;white-space:nowrap}
.edit-item:first-child .dd{margin-left:12px}
.b-sort,.b-find{width:150px}
.b-find{margin-left:6px}
.b-save{width:143px}
.az{font-size:50px;font-weight:normal}
.a{fill:#3f78b5}
.z{fill:#8e62ad}

/* formula */
.formula{height:108px;background:#e6e7e9;display:flex;padding:26px 0 25px}
.namebox{width:71px;background:#fff;border-bottom:2px solid #cfcfd1;border-top:2px solid #cfcfd1;border-right:2px solid #cfcfd1;display:flex;align-items:center;justify-content:flex-end;padding-right:12px}
.dd-name{border-width:10px 9px 0;border-top-color:#777;border-left-color:transparent;border-right-color:transparent}
.dots{width:5px;height:32px;margin:12px 37px 0 35px;background:repeating-linear-gradient(#bdbdbf 0 6px,transparent 6px 13px)}
.fx-btns{width:271px;background:#fff;border:2px solid #cfcfd1;display:grid;grid-template-columns:90px 90px 90px;justify-items:center;align-items:center}
.fx{font-family:"Liberation Serif",serif;font-style:italic;font-size:38px;color:#666}
.fx-input{margin-left:8px;flex:1;background:#fff;border-top:2px solid #cfcfd1;border-bottom:2px solid #cfcfd1;font-size:28px;line-height:53px;padding-left:30px;color:#444}

/* sheet */
.sheet{height:1414px;overflow:hidden;background:#fff;border-bottom:2px solid #a6a6a8;position:relative}
.grid{table-layout:fixed;width:3476px;margin-left:-20px;border-collapse:separate;border-spacing:0;font-size:23px;color:#111}
.c108{width:108px}.c161{width:161px}.c168{width:168px}.c219{width:219px}.c259{width:259px}.c210{width:210px}.c175{width:175px}.c169{width:169px}.c195{width:195px}.c96{width:96px}
.grid thead th{height:34px;background:#e7e8ea;font-weight:normal;font-size:25px;color:#444;border-right:1.500px solid #c8c8ca;border-bottom:2px solid #8e8e90;padding:0}
.grid thead th.cur{background:#d2d2d4;color:#217346;border-bottom:4px solid #217346}
.grid td{height:34.130px;padding:0 12px 0 0;text-align:right;white-space:nowrap;overflow:hidden;border-right:1px solid #dcdcdc;border-bottom:2px solid #d6d6d6;line-height:30px}
.grid td:first-child{font-size:26px;text-align:center;padding:0;letter-spacing:-.5px}
.grid .r1 td{height:35px}
.grid .r2 td{height:34px}
.grid .r3 td{height:99px}
.grid .r4 td{height:34px}
.grid .r6 td,.r6 th{height:99px}
.grid td.title{background:#ffff00;border-color:#ffff00;font-size:26px;text-align:center;padding-right:116px;color:#111}
.grid td.txt{text-align:left;padding:0 0 0 22px;color:#333;letter-spacing:0}
.grid td.pay{vertical-align:top;padding:50px 0 0 15px;font-size:26px;color:#555;line-height:36px}
.grid td.lab{font-size:26px;color:#555}
.grid td.lab3{padding-left:7px;font-size:25px}
.grid td.lab-total{padding-left:6px}
.grid td.ctr{text-align:center;padding:0}
.grid td.pink{background:#fde2d9;border-bottom-color:#fde2d9;text-align:left;padding:0 0 0 6px}
.grid td.nb{border-right-color:#fde2d9}
.redl{color:#e01018;font-size:26px}
.grid td.red{color:#e01018;font-size:26px;line-height:33px}
.sel{outline:4px solid #217346;outline-offset:-3px;position:relative}
.grid td.sel{overflow:visible}
.sel::after{content:"";position:absolute;right:-4px;bottom:-3px;width:9px;height:9px;background:#217346;border:1px solid #fff}
.r6 th{font-size:26px;font-weight:bold;color:#111;padding:0;border-right:1px solid #dcdcdc;border-bottom:2px solid #d6d6d6;background:#fff;white-space:nowrap;letter-spacing:-.5px}
.grid .r6 td{text-align:center;padding:0;font-size:26px;line-height:33px;color:#e01018;border-right-color:transparent;border-bottom-color:transparent}
.grid .r6 td:last-child{border-right:1px solid #dcdcdc;border-bottom:2px solid #d6d6d6}
.grid .r6 .hg{background:#548235;color:#1f2a14}
.grid .r6 .hp{background:#fde2d9}
.grid .r6 .hy{background:#ffd966}
.grid .r6 .hd{background:#595959;color:#d01218}
.grid td.yel{background:#ffff00;border-color:#ffff00}
.grid td.hot{background:#fb6c71;border-color:#fb6c71}
.grid td.warm{background:#fcbf7b;border-color:#fcbf7b}
.grid td.grn{background:#63be7b;border-color:#63be7b}
.grid td.lgrn{background:#9ccf7f;border-color:#9ccf7f}
.cursor{position:absolute;left:945px;top:256px;z-index:3}

/* sheet bar */
.sheetbar{height:49px;background:#e6e7e9;display:flex;border-bottom:2px solid #d0d0d2;padding-bottom:1px;flex:none}
.sheet-tab{width:126px;background:#fff;font-size:30px;line-height:41px;color:#217346;border-bottom:3px solid #217346;height:45px;white-space:nowrap;text-indent:-4px;overflow:hidden}
.addsheet{margin:6px 0 0 54px}
.sb-dots{margin:11px 0 0 1887px;height:32px}
.hscroll{margin:4px 0 0 22px;flex:1;display:flex;background:#dbdbdd;height:40px}
.sb-left{width:42px;background:#fff;border:2px solid #c8c8ca;display:flex;align-items:center;justify-content:center}
.sb-thumb{width:1058px;background:#fff;border:2px solid #c8c8ca;border-left:0}

/* status */
.status{height:80px;background:#f0eff2;display:flex;padding-left:3000px;align-items:center;flex:none}
.view{width:75px;height:80px;display:flex;align-items:center;justify-content:center;flex:none}
.view.active{background:#c8c8ca;width:74px}
.zoom-minus{width:15px;height:5px;background:#666;margin-left:8px;flex:none}
.slider{width:200px;height:3px;background:#aaa;margin-left:11px;position:relative;flex:none}
.slider-thumb{position:absolute;left:85px;top:-14px;width:8px;height:28px;background:#666}
.slider-tick{position:absolute;left:125px;top:-10px;width:1px;height:22px;background:#999}

/* taskbar */
.taskbar{height:100px;background:#1c1c1c;display:flex;flex:none}
.search{width:787px;background:#f0eff2;border-top:3px solid #c2c2c4;border-bottom:3px solid #c2c2c4;display:flex;align-items:center;font-size:39px;color:#444;white-space:nowrap;flex:none}
.mag{margin-right:30px;flex:none}
.apps{display:grid;grid-template-columns:121px 124px 126px 125px 124px 124px 125px 121px;flex:none}
.app{display:flex;align-items:center;justify-content:center;position:relative;padding-bottom:2px}
.app.on::after{content:"";position:absolute;left:11px;right:11px;bottom:0;height:5px;background:#76b9ed}
.cur-app{background:#454546}
.app.cur-app::after{left:0;right:0}
.xl{font-size:34px;font-weight:bold;fill:#fff}
.tray{flex:1;display:flex;align-items:center;padding-left:1267px;color:#fff;overflow:hidden}
.tray svg:nth-child(1){margin-right:26px}
.tray svg:nth-child(2){margin-right:26px}
.tray svg:nth-child(3){margin-right:20px}
.tray svg:nth-child(4){margin-right:18px}
.ime{font-size:40px;margin-right:36px;flex:none}
.clock{display:flex;flex-direction:column;font-size:30px;line-height:46px;white-space:nowrap;flex:none}
.clock span:first-child{padding-left:27px}
```
